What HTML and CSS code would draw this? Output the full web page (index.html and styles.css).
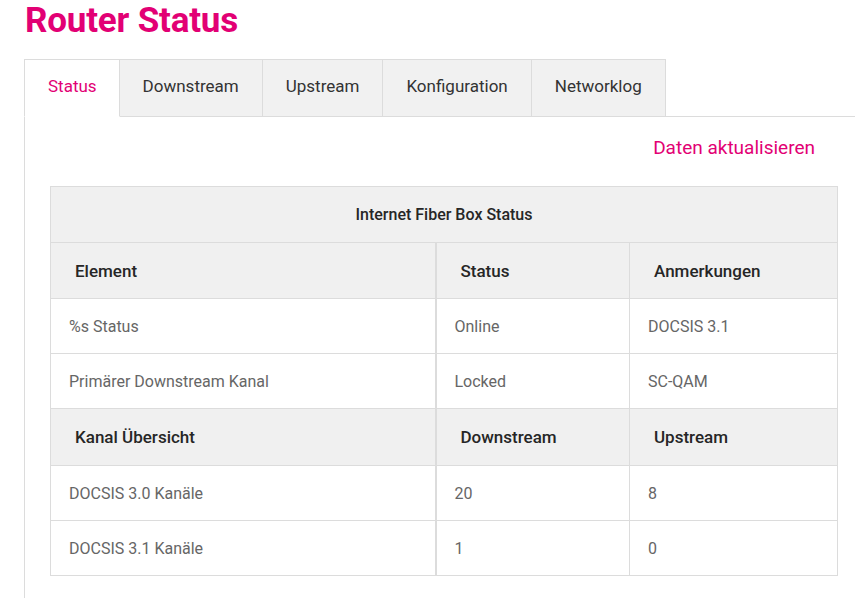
FILE: index.html
```html
<!DOCTYPE html>
<html lang="de">
<head>
<meta charset="utf-8">
<title>Router Status</title>
<link rel="stylesheet" href="styles.css">
</head>
<body>
<div class="page">
  <h1 class="title">Router Status</h1>
  <div class="tabs">
    <div class="tab active">Status</div>
    <div class="tab">Downstream</div>
    <div class="tab">Upstream</div>
    <div class="tab">Konfiguration</div>
    <div class="tab">Networklog</div>
    <div class="tab-fill"></div>
  </div>
  <div class="panel">
    <div class="actions"><a class="refresh">Daten aktualisieren</a></div>
    <table class="status">
      <tr class="caption-row"><th colspan="3">Internet Fiber Box Status</th></tr>
      <tr class="head"><th class="c1">Element</th><th class="c2">Status</th><th class="c3">Anmerkungen</th></tr>
      <tr><td>%s Status</td><td>Online</td><td>DOCSIS 3.1</td></tr>
      <tr><td>Primärer Downstream Kanal</td><td>Locked</td><td>SC-QAM</td></tr>
      <tr class="head tall"><th>Kanal Übersicht</th><th>Downstream</th><th>Upstream</th></tr>
      <tr><td>DOCSIS 3.0 Kanäle</td><td>20</td><td>8</td></tr>
      <tr><td>DOCSIS 3.1 Kanäle</td><td>1</td><td>0</td></tr>
    </table>
  </div>
</div>
</body>
</html>
```
FILE: styles.css
```css
html, body {
  margin: 0;
  padding: 0;
  background: #fff;
}
body {
  font-family: Roboto, "Liberation Sans", sans-serif;
  color: #333;
  overflow: hidden;
}
.page {
  padding-left: 24px;
}
.title {
  margin: 0;
  padding: 1px 0 0 1px;
  height: 57px;
  box-sizing: border-box;
  font-size: 35px;
  line-height: 40px;
  font-weight: 700;
  color: #e20074;
  letter-spacing: -0.2px;
}
.tabs {
  display: flex;
  height: 58px;
  margin-top: 2px;
}
.tab {
  box-sizing: border-box;
  height: 58px;
  padding: 0 23px;
  line-height: 52px;
  font-size: 17px;
  color: #333;
  background: #f1f1f1;
  border: 1px solid #dcdcdc;
  border-left: none;
}
.tab.active {
  background: #fff;
  color: #e20074;
  border-left: 1px solid #dcdcdc;
  border-bottom-color: #fff;
  padding: 0 22px 0 23px;
}
.tab-fill {
  flex: 1;
  border-bottom: 1px solid #dcdcdc;
}
.panel {
  border-left: 1px solid #dcdcdc;
  padding: 0 17px 30px 25px;
  margin-top: -1px;
}
.actions {
  display: flex;
  justify-content: flex-end;
  padding: 21px 23px 0 0;
  height: 48px;
  box-sizing: border-box;
}
.refresh {
  color: #e20074;
  font-size: 19px;
  line-height: 22px;
  cursor: pointer;
}
.status {
  width: 100%;
  border-collapse: collapse;
  margin-top: 22px;
  border: 1px solid #dcdcdc;
}
.status th, .status td {
  border: 1px solid #dcdcdc;
  text-align: left;
  height: 55px;
  box-sizing: border-box;
  padding: 0 18px;
}
.status td {
  font-size: 16px;
  color: #666;
}
.status .head th {
  background: #f0f0f0;
  font-size: 17px;
  font-weight: 500;
  color: #262626;
  padding-left: 24px;
  height: 56px;
}
.status .head.tall th {
  height: 57px;
}
.status .caption-row th {
  background: #f0f0f0;
  text-align: center;
  font-size: 16px;
  font-weight: 500;
  color: #262626;
  height: 56px;
}
.status .c1 { width: 385px; }
.status .c2 { width: 194px; }
.status td:first-child, .status .head th:first-child { border-right-width: 2px; }
```
